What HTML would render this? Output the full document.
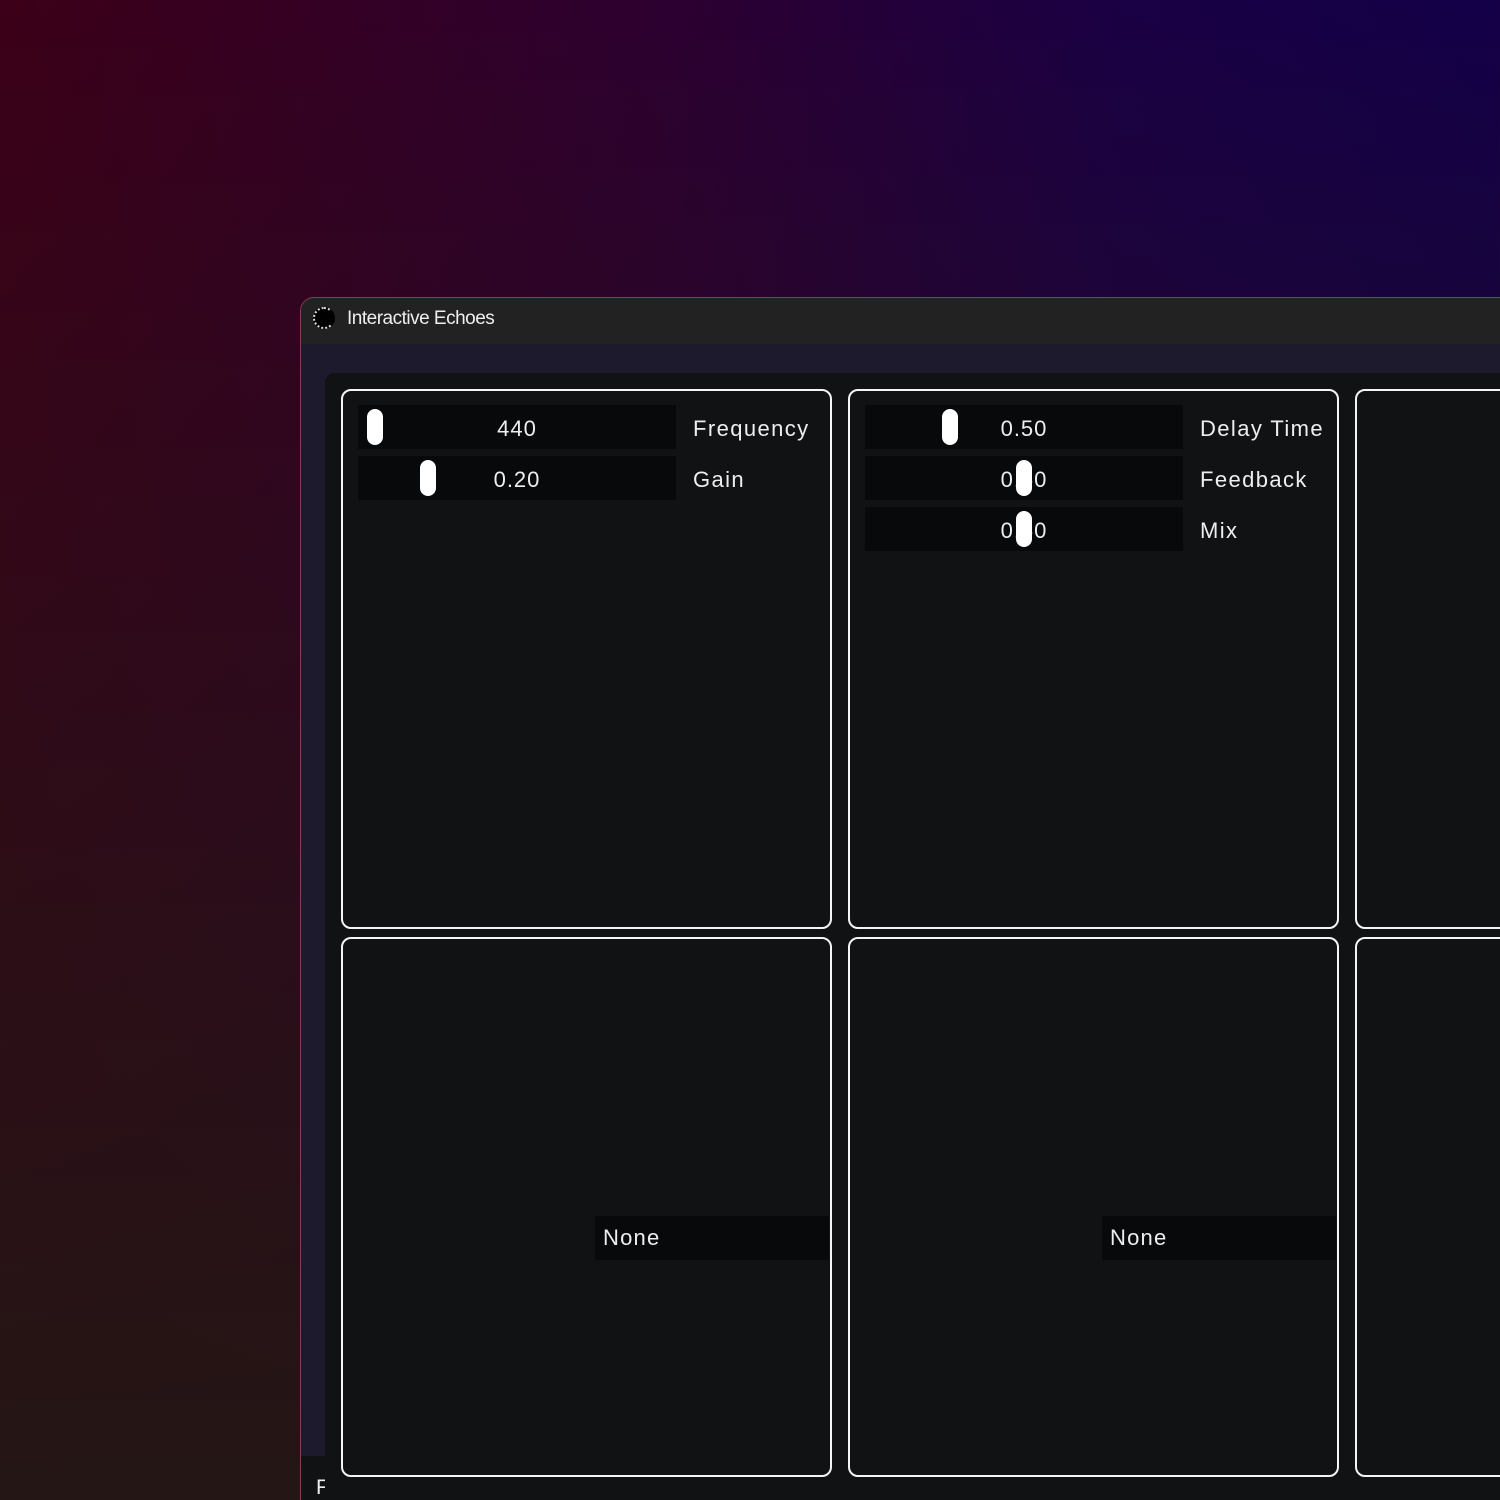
<!DOCTYPE html>
<html><head><style>
html,body{margin:0;padding:0;width:1500px;height:1500px;overflow:hidden}
body{background:linear-gradient(90deg,#3c0018 0%,#2c0030 45%,#1a0044 75%,#130048 100%);position:relative;font-family:"Liberation Sans",sans-serif}
.bl{position:absolute;inset:0;background:linear-gradient(180deg,rgba(36,20,22,0) 0%,rgba(36,20,22,0.5) 45%,rgba(36,22,20,1) 100%)}
.win{position:absolute;left:300px;top:297px;width:1210px;height:1220px;border:1px solid #8a3a5a;border-top-left-radius:14px;background:#1c1a2c;overflow:hidden}
.tb{position:absolute;left:0;top:0;right:0;height:46px;background:#222222;color:#eee;font-size:19px}
.tb span{position:absolute;left:46px;top:10px;letter-spacing:-0.5px}
.ic{position:absolute;left:12px;top:9px;width:22px;height:22px;border-radius:50%;background:#000;border:2px dotted #ddd;border-right-color:transparent;box-sizing:border-box}
.panel{position:absolute;left:24px;top:75px;right:0;bottom:0;background:#111214;border-top-left-radius:10px}
.foot{position:absolute;left:0;top:1158px;right:0;bottom:0;background:#111214;color:#eee;font-size:21px}
.card{position:absolute;border:2px solid #f4f4f4;border-radius:10px;background:#111214;box-sizing:border-box}
.sl{position:absolute;width:318px;height:44px;background:#08090b;color:#eee;font-size:22px}
.sl .v{position:absolute;left:0;right:0;text-align:center;top:11px;letter-spacing:1px}
.th{position:absolute;top:4px;width:16px;height:36px;border-radius:8px;background:#fff}
.lb{position:absolute;color:#eee;font-size:22px;letter-spacing:1.4px}
.none{position:absolute;height:44px;background:#08090b;color:#eee;font-size:22px;letter-spacing:1.2px;padding-left:8px;box-sizing:border-box;line-height:44px}
</style></head><body><div class="bl"></div>
<div class="win">
<div class="tb"><div class="ic"></div><span>Interactive Echoes</span></div>
<div class="foot"><span style="position:absolute;left:15px;top:20px">F.</span></div>
<div class="panel"></div>
</div>
<div class="card" style="left:341px;top:389px;width:491px;height:540px"></div>
<div class="card" style="left:848px;top:389px;width:491px;height:540px"></div>
<div class="card" style="left:1355px;top:389px;width:200px;height:540px"></div>
<div class="card" style="left:341px;top:937px;width:491px;height:540px"></div>
<div class="card" style="left:848px;top:937px;width:491px;height:540px"></div>
<div class="card" style="left:1355px;top:937px;width:200px;height:540px"></div>

<div class="sl" style="left:358px;top:405px"><div class="th" style="left:9px"></div><div class="v">440</div></div>
<div class="lb" style="left:693px;top:416px">Frequency</div>
<div class="sl" style="left:358px;top:456px"><div class="th" style="left:62px"></div><div class="v">0.20</div></div>
<div class="lb" style="left:693px;top:467px">Gain</div>

<div class="sl" style="left:865px;top:405px"><div class="th" style="left:77px"></div><div class="v">0.50</div></div>
<div class="lb" style="left:1200px;top:416px">Delay Time</div>
<div class="sl" style="left:865px;top:456px"><div class="v">0.50</div><div class="th" style="left:151px"></div></div>
<div class="lb" style="left:1200px;top:467px">Feedback</div>
<div class="sl" style="left:865px;top:507px"><div class="v">0.50</div><div class="th" style="left:151px"></div></div>
<div class="lb" style="left:1200px;top:518px">Mix</div>

<div class="none" style="left:595px;top:1216px;width:234px">None</div>
<div class="none" style="left:1102px;top:1216px;width:234px">None</div>
</body></html>
